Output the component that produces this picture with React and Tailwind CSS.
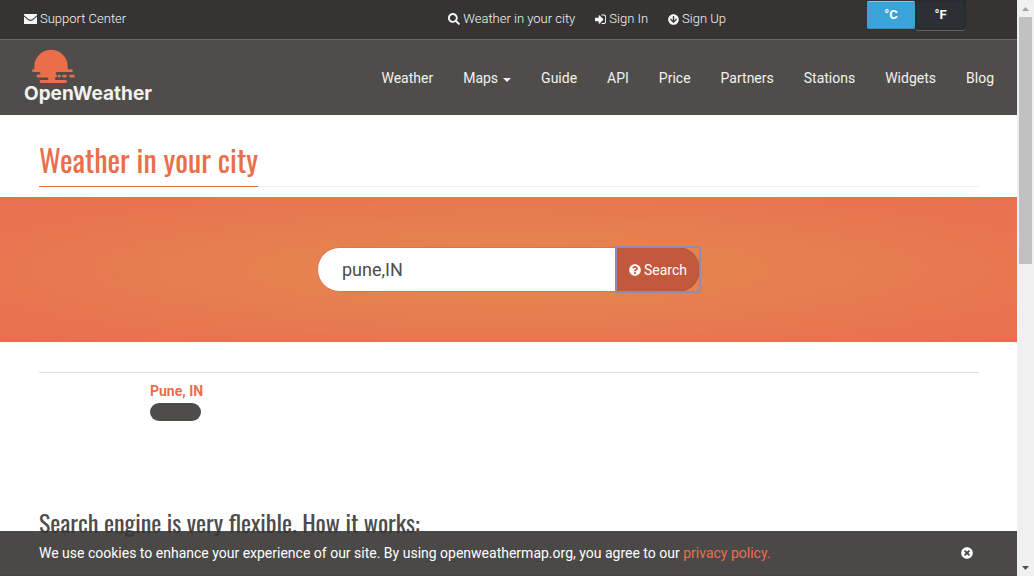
import React from "react";
import { FaSearch, FaArrowCircleDown, FaQuestionCircle, FaTimesCircle } from "react-icons/fa";

const linkClass = "flex items-center gap-[3px] hover:underline";

function EnvelopeIcon() {
  return (
    <svg width="13" height="10" viewBox="0 0 13 10" aria-hidden="true">
      <path fill="currentColor" d="M0 0h13v1.2L9 4.8Q6.500 6.800 4 4.800L0 1.200zM0 2.600l3.300 3Q6.500 8.200 9.700 5.600l3.300-3V10H0z" />
    </svg>
  );
}

function SignInIcon() {
  return (
    <svg width="11" height="11" viewBox="128 128 1536 1536" aria-hidden="true">
      <path fill="currentColor" d="M1312 896q0 26-19 45l-544 544q-19 19-45 19t-45-19-19-45v-288h-448q-26 0-45-19t-19-45v-384q0-26 19-45t45-19h448v-288q0-26 19-45t45-19 45 19l544 544q19 19 19 45zm352-352v704q0 119-84.500 203.500t-203.500 84.500h-320q-13 0-22.500-9.500t-9.500-22.500v-96q0-32 32-32h320q66 0 113-47t47-113v-704q0-66-47-113t-113-47h-320q-32 0-32-32v-96q0-32 32-32h320q119 0 203.500 84.500t84.500 203.500z" />
    </svg>
  );
}

function Logo() {
  return (
    <a href="#home" className="flex flex-col pl-6 pt-[10px] text-[#f2f2f2]">
      <svg className="ml-2" width="43" height="33" viewBox="0 0 43 33" aria-hidden="true">
        <path fill="#eb6e4b" d="M2.300 16.500A16.500 16.500 0 0 1 35.700 16.500V19.300H39.500a1.400 1.400 0 0 1 0 2.800H25.500q-1.800 0-1.800 1.200t0 1.300a1.400 1.400 0 0 1 0 2.900q-.7 0-.7 1.300T24 30H33.500a1.400 1.400 0 0 1 0 2.900H9a1.400 1.400 0 0 1 0-2.900h6q1.500 0 1.500-1.200T15 27.500H6a1.400 1.400 0 0 1 0-2.900h1q1.500 0 1.500-1.200T7 22.100H1.400a1.400 1.400 0 0 1 0-2.800h.9z" />
        <path stroke="#eb6e4b" strokeWidth="2.700" strokeLinecap="round" d="M27 26.100h.5M31.500 26.100h2M38.500 26.100h3" />
      </svg>
      <span className="font-[Inter,sans-serif] text-[19px] font-bold leading-[22px]">OpenWeather</span>
    </a>
  );
}

function TopBar() {
  return (
    <div className="flex h-10 items-start border-b border-[#6a6966] bg-[#363432] pl-6 pr-[51px] text-[13px] text-[#f4f6f7]">
      <div className="flex h-[38px] flex-1 items-center">
        <a href="#support" className={linkClass}><EnvelopeIcon /><span className="font-light">Support Center</span></a>
      </div>
      <nav className="mr-[141px] flex h-[38px] items-center gap-5 font-light" aria-label="Account">
        <a href="#find" className={linkClass}><FaSearch size={12} />Weather in your city</a>
        <a href="#sign-in" className={linkClass}><SignInIcon />Sign In</a>
        <a href="#sign-up" className={linkClass}><FaArrowCircleDown size={11} />Sign Up</a>
      </nav>
      <div className="flex font-bold text-white">
        <button type="button" aria-pressed="true" className="mt-px h-7 w-12 rounded-xs border-y border-t-[#7fc8ec] border-b-[#2f8fc0] bg-[#3aa3d8] pb-px">°C</button>
        <button type="button" aria-pressed="false" className="h-[31px] w-[51px] rounded-b-sm border-b border-[#666462] bg-[#2c2f34] pb-px shadow-[inset_0_0_3px_#222325]">°F</button>
      </div>
    </div>
  );
}

function Header() {
  return (
    <header className="flex h-[75px] justify-between bg-[#4f4d49]">
      <Logo />
      <nav className="flex items-center gap-[30px] pr-[23px] text-[14px] text-[#f2f2f2]" aria-label="Main">
        <a href="#weather">Weather</a>
        <a href="#maps" className="flex items-center gap-[5px]">Maps
          <svg className="mt-1" width="8" height="4" viewBox="0 0 8 4" aria-hidden="true"><path fill="currentColor" d="M0 0h8L4 4z" /></svg>
        </a>
        <a href="#guide">Guide</a>
        <a href="#api">API</a>
        <a href="#price">Price</a>
        <a href="#partners">Partners</a>
        <a href="#stations">Stations</a>
        <a href="#widgets">Widgets</a>
        <a href="#blog">Blog</a>
      </nav>
    </header>
  );
}

function Scrollbar() {
  return (
    <div className="flex w-[17px] shrink-0 flex-col items-center bg-[#f0f0f0]" aria-hidden="true">
      <div className="flex h-[17px] items-center"><svg width="7" height="4" viewBox="0 0 7 4"><path fill="#a3a3a3" d="M0 4h7L3.500 0z" /></svg></div>
      <div className="h-[247px] w-[13px] bg-[#c1c1c1]" />
      <div className="mt-auto flex h-[17px] items-center"><svg width="7" height="4" viewBox="0 0 7 4"><path fill="#505050" d="M0 0h7L3.500 4z" /></svg></div>
    </div>
  );
}

export default function App() {
  return (
    <div className="flex h-screen overflow-hidden bg-white font-[Roboto,sans-serif] text-[14px] leading-5 text-[#4c4c4c]">
      <div className="relative min-w-0 flex-1 overflow-hidden">
        <TopBar />
        <Header />
        <main>
          <div className="ml-[39px] mr-[38px] mt-5 flex h-[52px] border-b border-[#eeeeee]">
            <h1 className="-mb-px flex items-center border-b border-[#eb6e4b] pb-px font-['Oswald','Liberation_Sans_Narrow',Roboto,sans-serif] text-[30px] leading-10 text-[#eb6e4b]">Weather in your city</h1>
          </div>
          <section className="mt-[10px] flex h-[145px] items-center justify-center bg-[radial-gradient(ellipse_at_center,#e48a4f_0%,#e96e50_100%)]">
            <form className="flex h-[45px]" onSubmit={(e) => e.preventDefault()}>
              <input id="city" aria-label="City" defaultValue="pune,IN" className="w-[299px] rounded-l-full border border-[#eb6e4b] bg-white px-6 text-[18px] text-[#4c4c4c] outline-none" />
              <div className="flex w-[84px] rounded-r-xs outline-2 -outline-offset-1 outline-[#8f8bb5]">
                <button type="submit" className="flex flex-1 items-center justify-center gap-[3px] rounded-r-full border border-[#a8553a] border-l-[#c2593c] bg-[#c2593c] text-white"><FaQuestionCircle size={12} />Search</button>
              </div>
            </form>
          </section>
          <section className="ml-[39px] mr-[38px] mt-[30px] border-t border-[#dddddd] pl-[111px] pt-[8px]">
            <a href="#pune" className="block font-bold text-[#eb6e4b]">Pune, IN</a>
            <div className="mt-[2px] h-[18px] w-[51px] rounded-full bg-[#4f4d49]" />
          </section>
          <h2 className="ml-[39px] mt-[85px] font-['Oswald','Liberation_Sans_Narrow',Roboto,sans-serif] text-[24px] leading-8 text-[#4c4c4c]">Search engine is very flexible. How it works:</h2>
        </main>
        <div className="absolute inset-x-0 bottom-0 flex h-[45px] items-center justify-between border-b border-[#454241] bg-[#373533]/90 pl-[39px] pr-[44px] text-[14px] text-white">
          <p>We use cookies to enhance your experience of our site. By using openweathermap.org, you agree to our <a href="#privacy" className="text-[#eb6e4b]">privacy policy.</a></p>
          <button type="button" aria-label="Close"><FaTimesCircle size={12} /></button>
        </div>
      </div>
      <Scrollbar />
    </div>
  );
}
